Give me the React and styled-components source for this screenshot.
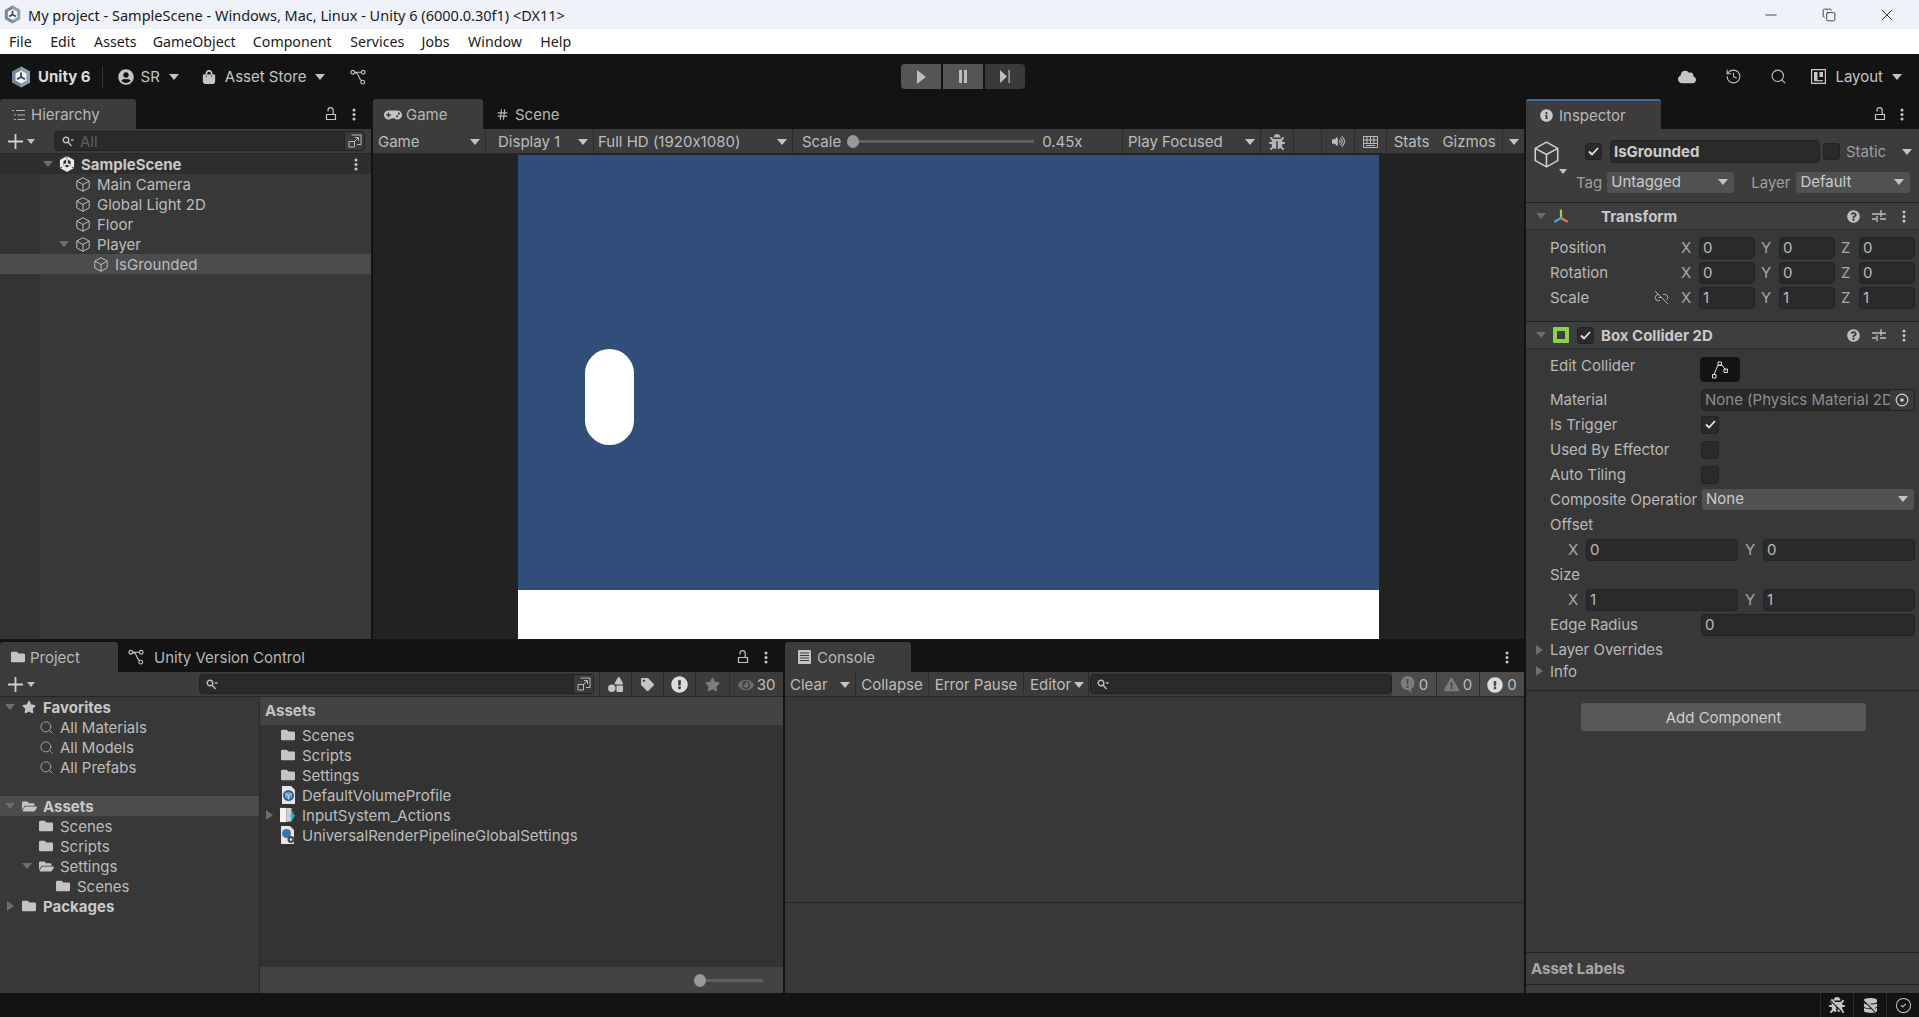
import React from 'react';
import styled, { createGlobalStyle } from 'styled-components';
import { FaBug, FaCloud, FaDatabase, FaExclamationCircle, FaExclamationTriangle, FaEye, FaFolder, FaFolderOpen, FaGamepad, FaInfoCircle, FaQuestionCircle, FaShoppingBag, FaStar, FaTag, FaUserCircle, FaVolumeUp, FaShapes } from 'react-icons/fa';
import { CircleCheck, Hash, History, Search, Link2Off, Minus, X, Copy } from 'lucide-react';

const Global = createGlobalStyle`
  html, body { margin: 0; padding: 0; background: #131313; }
  body { font-family: Inter, "Liberation Sans", sans-serif; font-size: 15px; color: #c2c2c2; overflow: hidden; font-feature-settings: "calt" 0; }
  * { box-sizing: border-box; }
`;

const Root = styled.div`display:flex;flex-direction:column;width:1919px;height:1017px;overflow:hidden;background:#131313;`;
const TitleBar = styled.div`height:29px;background:#eff3f9;display:flex;align-items:center;padding:0 3px 0 4px;color:#1a1a1a;font-family:"Noto Sans",sans-serif;font-size:14.5px;`;
const WinTitle = styled.span`margin-left:7px;flex:1;white-space:pre;`;
const WinBtn = styled.span`width:58px;height:29px;display:flex;align-items:center;justify-content:center;color:#111;`;
const MenuBar = styled.div`height:25px;background:#fff;display:flex;align-items:center;color:#1a1a1a;font-family:"Noto Sans",sans-serif;font-size:14.2px;padding-left:9px;`;
const MenuItem = styled.span`margin-right:${p => p.$mr ?? 18.5}px;`;

const MainBar = styled.div`height:45px;display:grid;grid-template-columns:901px auto 1fr;align-items:center;`;
const BarZone = styled.div`display:flex;align-items:center;height:45px;`;
const BarRight = styled(BarZone)`justify-content:flex-end;padding-right:17px;`;
const BarItem = styled.div`display:flex;align-items:center;margin-left:${p => p.$ml || 0}px;color:${p => p.$c || '#c4c4c4'};font-weight:${p => p.$bold ? 700 : 400};`;
const BarDivider = styled.span`width:1px;height:22px;background:#333;margin-left:${p => p.$ml}px;`;
const PlayGroup = styled.div`display:flex;gap:2px;`;
const PlayBtn = styled.div`width:40px;height:25px;border-radius:${p => p.$r};background:${p => p.$dim ? '#3a3a3a' : '#555'};display:flex;align-items:center;justify-content:center;color:#bdbdbd;`;

const Workspace = styled.div`flex:1;display:flex;gap:2px;min-height:0;`;
const LeftCol = styled.div`width:1524px;display:flex;flex-direction:column;gap:3px;`;
const TopRow = styled.div`height:540px;display:flex;gap:2px;`;
const BottomRow = styled.div`height:351px;display:flex;gap:2px;`;
const Panel = styled.div`width:${p => p.$w}px;display:flex;flex-direction:column;flex:none;min-height:0;`;
const TabStrip = styled.div`height:30px;display:flex;align-items:stretch;flex:none;`;
const Tab = styled.div`width:${p => p.$w}px;white-space:nowrap;display:flex;align-items:center;padding-left:${p => p.$pl}px;padding-top:${p => p.$pt || 0}px;gap:${p => p.$gap ?? 5}px;background:${p => p.$on ? '#3c3c3c' : 'transparent'};border-radius:3px 3px 0 0;color:#b8b8b8;${p => p.$blue ? 'border-top:2px solid #3c6a9c;' : ''}`;
const TabTools = styled.div`margin-left:auto;display:flex;align-items:center;gap:${p => p.$gap ?? 12}px;padding-right:${p => p.$pr}px;color:#bdbdbd;`;

const Bar = styled.div`height:25px;flex:none;background:#3c3c3c;border-bottom:1px solid #272727;display:flex;align-items:stretch;`;
const Cell = styled.div`width:${p => p.$w}px;flex:none;display:flex;align-items:center;justify-content:${p => p.$center ? 'center' : p.$start ? 'flex-start' : 'space-between'};padding:1px ${p => p.$pr ?? 5}px 0 ${p => p.$pl ?? 5}px;border-right:${p => p.$noline ? 'none' : '1px solid #2c2c2c'};color:#bcbcbc;background:${p => p.$bg || 'transparent'};gap:${p => p.$gap || 0}px;white-space:nowrap;`;
const SearchBox = styled.div`height:20px;align-self:center;width:${p => p.$w}px;margin-left:${p => p.$ml || 0}px;background:#2a2a2a;border:1px solid #212121;border-radius:4px;display:flex;align-items:center;padding-left:${p => p.$pl ?? 7}px;color:#5f5f5f;flex:none;gap:6px;`;
const SearchEnd = styled.span`margin-left:auto;width:20px;height:18px;border-left:1px solid #222;background:#3a3a3a;display:flex;align-items:center;justify-content:center;border-radius:0 3px 3px 0;`;
const PlusWrap = styled.div`display:flex;align-items:center;color:#c8c8c8;padding-left:8px;gap:4px;flex:none;width:${p => p.$w}px;`;
const SliderTrack = styled.span`height:3px;background:#5e5e5e;position:relative;display:block;flex:none;width:${p => p.$w}px;`;
const SliderThumb = styled.span`position:absolute;left:${p => p.$l}px;top:-5px;width:12px;height:13px;border-radius:50%;background:#999;`;
const ScaleLabel = styled.span`margin-right:6px;`;
const ScaleValue = styled.span`margin-left:8px;`;

const Caret = styled.span`display:inline-block;flex:none;width:0;height:0;margin-left:${p => p.$ml || 0}px;
  ${p => p.$right
    ? `border-top:5px solid transparent;border-bottom:5px solid transparent;border-left:7px solid ${p.$c || '#6e6e6e'};`
    : `border-left:${p.$s || 5}px solid transparent;border-right:${p.$s || 5}px solid transparent;border-top:${(p.$s || 5) + 1}px solid ${p.$c || '#c4c4c4'};`}`;

const Tree = styled.div`flex:1;background:${p => p.$gutter ? 'linear-gradient(to right,#333 40px,#383838 40px)' : '#383838'};min-height:0;display:flex;flex-direction:column;`;
const TreeRow = styled.div`height:20px;flex:none;display:flex;align-items:center;padding-left:${p => p.$in}px;background:${p => p.$sel ? '#4c4c4c' : p.$scene ? '#2e2e2e' : 'transparent'};color:${p => p.$bold ? '#c9c9c9' : '#bdbdbd'};font-weight:${p => p.$bold ? 700 : 400};white-space:nowrap;margin-top:${p => p.$mt || 0}px;`;
const CaretSlot = styled.span`width:16px;flex:none;display:flex;justify-content:center;align-items:center;`;
const IconSlot = styled.span`width:16px;height:16px;flex:none;margin:0 6px 0 3px;display:flex;align-items:center;justify-content:center;color:#c4c4c4;`;
const RowEnd = styled.span`margin-left:auto;padding-right:13px;display:flex;`;

const Viewport = styled.div`flex:1;background:#222;display:flex;justify-content:center;min-height:0;padding-top:1px;`;
const GameFrame = styled.div`width:861px;display:flex;flex-direction:column;`;
const Sky = styled.div`flex:1;background:#314d79;position:relative;`;
const Capsule = styled.div`position:absolute;left:67px;top:194px;width:49px;height:96px;background:#fff;border-radius:25px;`;
const Ground = styled.div`height:49px;background:#fff;flex:none;`;

const ProjectBody = styled.div`flex:1;display:flex;min-height:0;`;
const ProjectTree = styled.div`width:260px;flex:none;background:#383838;border-right:1px solid #2a2a2a;display:flex;flex-direction:column;`;
const ProjectFiles = styled.div`flex:1;display:flex;flex-direction:column;background:#333;`;
const PathHead = styled.div`height:28px;flex:none;background:#434343;display:flex;align-items:center;padding:0 0 2px 5px;font-weight:700;color:#c2c2c2;`;
const FileList = styled.div`flex:1;`;
const FileFooter = styled.div`height:26px;flex:none;background:#434343;display:flex;align-items:center;justify-content:flex-end;padding-right:20px;`;

const ConsoleBody = styled.div`flex:1;display:flex;flex-direction:column;background:#383838;`;
const ConsoleTop = styled.div`height:206px;flex:none;border-bottom:1px solid #262626;`;

const Inspector = styled.div`flex:1;display:flex;flex-direction:column;min-width:0;`;
const InspBody = styled.div`flex:1;background:#3c3c3c;display:flex;flex-direction:column;min-height:0;`;
const ObjHeader = styled.div`height:74px;flex:none;border-bottom:1px solid #222;display:grid;grid-template-columns:50px 1fr;padding:11px 6px 0 9px;background:#3c3c3c;`;
const ObjIcon = styled.div`display:flex;flex-direction:column;align-items:flex-start;color:#d0d0d0;`;
const CubeHolder = styled.span`display:flex;margin-left:-3px;`;
const ObjLines = styled.div`display:flex;flex-direction:column;gap:8px;`;
const ObjLine = styled.div`display:flex;align-items:center;height:23px;`;
const Check = styled.span`width:${p => p.$s || 17}px;height:${p => p.$s || 17}px;background:#2a2a2a;border:1px solid #232323;border-radius:3px;flex:none;display:flex;align-items:center;justify-content:center;margin-left:${p => p.$ml || 0}px;margin-right:${p => p.$mr || 0}px;`;
const NameField = styled.div`width:210px;height:23px;flex:none;background:#2a2a2a;border:1px solid #232323;border-radius:4px;display:flex;align-items:center;padding-left:3px;font-weight:700;color:#cdcdcd;margin-left:8px;`;
const Select = styled.div`width:${p => p.$w}px;height:${p => p.$h || 21}px;flex:none;background:#515151;border-radius:3px;display:flex;align-items:center;justify-content:space-between;padding:0 6px 2px 4px;color:#cbcbcc;margin-left:${p => p.$ml || 0}px;`;
const SoftLabel = styled.span`color:#9f9f9f;margin-left:${p => p.$ml || 0}px;`;
const StaticCaret = styled.span`margin-left:auto;margin-right:1px;display:flex;`;

const CompHead = styled.div`height:${p => p.$h || 27}px;flex:none;display:flex;align-items:center;padding:0 13px 0 10px;border-bottom:1px solid #2e2e2e;background:#3e3e3e;font-weight:700;color:#c8c8c8;`;
const CompIcon = styled.span`width:16px;margin-left:${p => p.$ml}px;display:flex;flex:none;`;
const CompName = styled.span`margin-left:${p => p.$ml || 0}px;`;
const CompTools = styled.span`margin-left:auto;display:flex;align-items:center;gap:12px;color:#bdbdbd;`;
const SliderSlot = styled.span`display:flex;margin-right:4px;`;
const CompBody = styled.div`flex:none;padding:${p => p.$pad};border-bottom:${p => p.$line ? '1px solid #222' : 'none'};background:#383838;`;
const PropRow = styled.div`height:${p => p.$h || 25}px;display:flex;align-items:center;padding-left:${p => p.$pl ?? 24}px;padding-right:4px;color:#b9b9b9;`;
const PropLabel = styled.span`width:${p => p.$w || 151}px;flex:none;white-space:nowrap;overflow:hidden;display:flex;align-items:center;justify-content:space-between;padding-right:${p => p.$pr || 0}px;margin-top:${p => p.$mt || 0}px;align-self:${p => p.$top ? 'flex-start' : 'auto'};`;
const AxisName = styled.span`width:${p => p.$w || 18}px;flex:none;color:#a8a8a8;`;
const Num = styled.div`height:22px;width:${p => p.$w ? `${p.$w}px` : 'auto'};flex:${p => p.$w ? 'none' : 1};background:#2a2a2a;border:1px solid #232323;border-radius:4px;display:flex;align-items:center;padding-left:3px;margin-right:${p => p.$mr || 0}px;color:#bbb;white-space:nowrap;overflow:hidden;`;
const ObjField = styled(Num)`color:#8e8e8e;padding-right:0;`;
const ObjText = styled.span`flex:1;overflow:hidden;white-space:nowrap;`;
const ObjPick = styled.span`width:24px;height:20px;background:#3a3a3a;flex:none;display:flex;align-items:center;justify-content:center;`;
const EditBtn = styled.div`width:40px;height:25px;background:#141414;border-radius:4px;display:flex;align-items:center;justify-content:center;margin-left:-1px;align-self:flex-start;`;
const FoldRow = styled.div`height:${p => p.$h}px;display:flex;align-items:center;padding-left:10px;gap:7px;color:#b9b9b9;`;
const AddWrap = styled.div`flex:none;padding:12px 0 0 55px;border-top:1px solid #232323;background:#383838;`;
const AddBtn = styled.div`width:285px;height:28px;background:#585858;border-radius:3px;display:flex;align-items:center;justify-content:center;color:#cfcfcf;`;
const Filler = styled.div`flex:1;background:#383838;`;
const LabelsHead = styled.div`height:33px;flex:none;border-top:1px solid #222;border-bottom:1px solid #222;display:flex;align-items:center;padding-left:5px;background:#3c3c3c;font-weight:700;color:#a8a8a8;`;
const LabelsTail = styled.div`height:8px;flex:none;background:#3c3c3c;`;

const StatusBar = styled.div`height:24px;flex:none;display:flex;justify-content:flex-end;align-items:center;`;
const StatusCell = styled.span`width:33px;height:24px;border-left:1px solid #2d2d2d;display:flex;align-items:center;justify-content:center;color:#c4c4c4;position:relative;
  ${p => p.$slash ? `&::after{content:"";position:absolute;left:8px;right:8px;top:11px;height:2px;background:#c4c4c4;box-shadow:0 1px 0 #131313;transform:rotate(45deg);}` : ''}`;

/* drawn icons */
const UnityLogo = ({ s = 20 }) => (
  <svg width={s} height={s + 2} viewBox="0 0 20 22">
    <path d="M10 .5l9 5.100v10.800L10 21.500 1 16.400V5.600z" fill="#75869a" />
    <path d="M10 .5l9 5.100v10.800L10 21.500z" fill="#8e9fb0" />
    <path d="M10 4.500l5.500 3.100v6.800L10 17.500l-5.500-3.100V7.600z" fill="#f1f3f5" />
    <path d="M10 11V6.500M10 11l-4 2.300M10 11l4 2.300" stroke="#39485a" strokeWidth="1.900" />
  </svg>
);
const SceneIcon = () => (
  <svg width="17" height="18" viewBox="0 0 17 18">
    <path d="M8.500.5l7.500 4.200v8.600l-7.500 4.200L1 13.300V4.700z" fill="#ececec" />
    <path d="M8.500 3.800l3.800 2.200v4.400l-3.800 2.200-3.800-2.200V6z" fill="#2e2e2e" />
    <path d="M8.500 4v4.500M8.500 8.500L5 10.500M8.500 8.500l3.500 2" stroke="#ececec" strokeWidth="1.800" />
    <path d="M8.500 0v3M1 13.500l2.600-1.500M16 13.500L13.400 12" stroke="#2e2e2e" strokeWidth="1" />
  </svg>
);
const Cube = ({ s = 17, c = '#bcbcbc', w = 1 }) => (
  <svg width={s} height={s} viewBox="0 0 16 16" fill="none" stroke={c} strokeWidth={w}>
    <path d="M8 1.200l6.200 3.400v6.800L8 14.800l-6.200-3.400V4.600zM1.800 4.600L8 8l6.200-3.400M8 8v6.800" strokeLinejoin="round" />
  </svg>
);
const Lock = () => (
  <svg width="12" height="14" viewBox="0 0 12 14" fill="none" stroke="#c4c4c4" strokeWidth="1.200">
    <path d="M1.500 7.500h9v5h-9zM3 4.500V3.200a2.600 2.600 0 0 1 5.200 0v4.300" />
  </svg>
);
const Dots = ({ c = '#c8c8c8' }) => (
  <svg width="4" height="13" viewBox="0 0 4 13" fill={c}>
    <circle cx="2" cy="2" r="1.500" /><circle cx="2" cy="6.500" r="1.500" /><circle cx="2" cy="11" r="1.500" />
  </svg>
);
const ListIcon = () => (
  <svg width="13" height="12" viewBox="0 0 13 12" stroke="#b0b0b0" fill="none">
    <path d="M0 1.500h2M4 1.500h9M2 6h2M5.500 6H13M2 10.500h2M5.500 10.500H13" />
  </svg>
);
const Branch = ({ c = '#c4c4c4' }) => (
  <svg width="16" height="16" viewBox="0 0 17 17" fill="none" stroke={c} strokeWidth="1.200">
    <circle cx="3" cy="3.500" r="2" /><circle cx="14" cy="3.500" r="2" /><circle cx="13.500" cy="14" r="2" />
    <path d="M5 3.500h7M5 4c3 0 3 1 4.500 4.500 1 2.500 2 3.500 3 4" />
  </svg>
);
const Plus = () => (
  <svg width="15" height="15" viewBox="0 0 15 15" stroke="#d0d0d0" strokeWidth="1.800"><path d="M7.500 0v15M0 7.500h15" /></svg>
);
const MiniSearch = () => (
  <svg width="12" height="11" viewBox="0 0 12 11" fill="none" stroke="#bdbdbd" strokeWidth="1.400">
    <circle cx="4" cy="4" r="2.800" /><path d="M6 6l3.500 4M9 4h2.500" />
  </svg>
);
const SearchExpand = () => (
  <svg width="14" height="14" viewBox="0 0 14 14" fill="none" stroke="#b8b8b8">
    <path d="M3.500 1h9.500v9.500H9M1 7.500h5.500V13H1zM6 8l4.500-4.500M7 3.500h3.500V7" />
  </svg>
);
const LayoutGlyph = () => (
  <svg width="15" height="15" viewBox="0 0 15 15" fill="none" stroke="#c8c8c8" strokeWidth="1.200">
    <path d="M.6.600h13.800v13.800H.600z" /><path d="M3 3h3.500v8H3zM8.500 3H12v5H8.500z" fill="#c8c8c8" stroke="none" /><path d="M3 11.700h9" />
  </svg>
);
const KeyGrid = () => (
  <svg width="15" height="14" viewBox="0 0 15 14" fill="none" stroke="#bdbdbd">
    <path d="M.5 1.500h14v11H.5zM.5 5h14M.5 8.500h14M4 1.500v7M7.500 1.500v7M11 1.500v7M3 10.500h9" />
  </svg>
);
const PlayGlyph = () => <svg width="10" height="14" viewBox="0 0 10 14" fill="#bdbdbd"><path d="M1 0l9 7-9 7z" /></svg>;
const PauseGlyph = () => <svg width="10" height="13" viewBox="0 0 10 13" fill="#bdbdbd"><path d="M1 0h3v13H1zM6 0h3v13H6z" /></svg>;
const StepGlyph = () => <svg width="12" height="13" viewBox="0 0 12 13" fill="#bdbdbd"><path d="M1 0l7 6.500-7 6.500zM9.500 0h1.200v13H9.500z" /></svg>;
const AxisGlyph = () => (
  <svg width="16" height="15" viewBox="0 0 16 15" fill="none" strokeWidth="2.200" strokeLinecap="round">
    <path d="M8 8V1.500" stroke="#9fd34e" /><path d="M8 9l6 3.500" stroke="#e9764f" /><path d="M8 9l-6 3.500" stroke="#47a8dc" />
  </svg>
);
const ColliderGlyph = () => (
  <svg width="16" height="16" viewBox="0 0 16 16"><rect width="16" height="16" rx="1" fill="#8fd14f" /><rect x="4" y="4" width="8" height="8" fill="#3e3e3e" /></svg>
);
const Tick = () => (
  <svg width="11" height="9" viewBox="0 0 11 9" fill="none" stroke="#e6e6e6" strokeWidth="1.800"><path d="M1 4.500l3 3 6-6.500" /></svg>
);
const Sliders = () => (
  <svg width="14" height="12" viewBox="0 0 14 12" stroke="#c0c0c0" strokeWidth="1.300"><path d="M0 4h14M0 9h4M8 9h6M9 0v7M5 6v6" /></svg>
);
const Polyline = () => (
  <svg width="18" height="18" viewBox="0 0 18 18" fill="none" stroke="#dcdcdc"><path d="M3 13.500L7 4h4l4 5.500" /><path d="M1.500 13.500h3.500V17H1.500zM7 1h3.500v3.500H7zM13 8h3.500v3.500H13z" /></svg>
);
const PickGlyph = () => (
  <svg width="14" height="14" viewBox="0 0 14 14" fill="none" stroke="#d0d0d0" strokeWidth="1.200"><circle cx="7" cy="7" r="5.800" /><circle cx="7" cy="7" r="1.800" fill="#d0d0d0" stroke="none" /></svg>
);
const ConsoleGlyph = () => (
  <svg width="13" height="14" viewBox="0 0 13 14"><rect width="13" height="14" rx="1" fill="#c4c4c4" /><path d="M2 3h9M2 5.500h9M2 8h9M2 10.500h9" stroke="#3c3c3c" /></svg>
);
const InfoBubble = () => (
  <svg width="15" height="17" viewBox="0 0 15 17"><path d="M7.500 0a7 7 0 0 1 7 7c0 3-1.500 5-3.500 6l1 4-4-3a7 7 0 0 1-.500-14z" fill="#7c7c7c" /><path d="M6.500 3h2l-.3 5.500h-1.400zM6.500 10h2v2h-2z" fill="#4b4b4b" /></svg>
);
const DocVolume = () => (
  <svg width="15" height="18" viewBox="0 0 15 18"><path d="M1 0h9l4 4v14H1z" fill="#e6e6e6" /><circle cx="7.500" cy="9.500" r="5.500" fill="#2f5f8f" /><path d="M7.500 5.500l3.500 2v4l-3.500 2-3.500-2v-4z" fill="#6aa0cf" /><path d="M7.500 9.500v4M4 7.500l3.500 2 3.500-2" stroke="#c9dcef" strokeWidth=".8" fill="none" /></svg>
);
const BookGlyph = () => (
  <svg width="18" height="18" viewBox="0 0 18 18"><path d="M0 1h7v16H0z" fill="#f2f2f2" /><path d="M7 1h6v15l-6 1z" fill="#cfcfcf" /><path d="M15 4l-4 7h2l-1 7 5-9h-2z" fill="#29b6e8" /></svg>
);
const DocGear = () => (
  <svg width="16" height="18" viewBox="0 0 16 18"><path d="M1 0h9l4 4v14H1z" fill="#e6e6e6" /><circle cx="6.500" cy="7.500" r="4.500" fill="#3f74a8" /><circle cx="11" cy="13.500" r="3.500" fill="#4a4a4a" /><circle cx="11" cy="13.500" r="1.200" fill="#e6e6e6" /></svg>
);

const Row = ({ in: indent, caret, right, icon, children, end, ...rest }) => (
  <TreeRow $in={indent} {...rest}>
    <CaretSlot>{caret ? <Caret $c="#6e6e6e" $s={5} /> : right ? <Caret $right /> : null}</CaretSlot>
    <IconSlot>{icon}</IconSlot>
    {children}
    {end}
  </TreeRow>
);

const Folder = <FaFolder size={14} color="#c4c4c4" />;
const FolderOpen = <FaFolderOpen size={15} color="#c4c4c4" />;
const Lens = <Search size={15} color="#a8a8a8" strokeWidth={1.500} />;

const VecRow = ({ label, v, extra }) => (
  <PropRow>
    <PropLabel $w={131} $pr={12}>{label}{extra}</PropLabel>
    <AxisName>X</AxisName><Num $w={56} $mr={6}>{v}</Num>
    <AxisName>Y</AxisName><Num $w={56} $mr={6}>{v}</Num>
    <AxisName>Z</AxisName><Num $w={56}>{v}</Num>
  </PropRow>
);
const PairRow = ({ v }) => (
  <PropRow $pl={42}>
    <AxisName>X</AxisName><Num $w={152} $mr={7}>{v}</Num>
    <AxisName>Y</AxisName><Num>{v}</Num>
  </PropRow>
);

export default function App() {
  return (
    <Root>
      <Global />
      <TitleBar>
        <UnityLogo s={17} />
        <WinTitle>{'My project - SampleScene - Windows, Mac, Linux - Unity 6 (6000.0.30f1) <DX11>'}</WinTitle>
        <WinBtn><Minus size={18} strokeWidth={1} /></WinBtn>
        <WinBtn><Copy size={14} strokeWidth={1.300} /></WinBtn>
        <WinBtn><X size={20} strokeWidth={1} /></WinBtn>
      </TitleBar>
      <MenuBar>
        <MenuItem>File</MenuItem><MenuItem>Edit</MenuItem><MenuItem $mr={16}>Assets</MenuItem>
        <MenuItem $mr={17.200}>GameObject</MenuItem><MenuItem>Component</MenuItem><MenuItem $mr={17.300}>Services</MenuItem>
        <MenuItem>Jobs</MenuItem><MenuItem>Window</MenuItem><MenuItem $mr={0}>Help</MenuItem>
      </MenuBar>
      <MainBar>
        <BarZone>
          <BarItem $ml={11}><UnityLogo /></BarItem>
          <BarItem $ml={7} $bold $c="#dcdcdc">Unity 6</BarItem>
          <BarDivider $ml={11} />
          <BarItem $ml={15}><FaUserCircle size={16} /></BarItem>
          <BarItem $ml={7}>SR</BarItem>
          <BarItem $ml={9}><Caret /></BarItem>
          <BarItem $ml={23}><FaShoppingBag size={14} /></BarItem>
          <BarItem $ml={9}>Asset Store</BarItem>
          <BarItem $ml={9}><Caret /></BarItem>
          <BarItem $ml={25}><Branch /></BarItem>
        </BarZone>
        <PlayGroup>
          <PlayBtn $r="4px 0 0 4px"><PlayGlyph /></PlayBtn>
          <PlayBtn $r="0"><PauseGlyph /></PlayBtn>
          <PlayBtn $r="0 4px 4px 0" $dim><StepGlyph /></PlayBtn>
        </PlayGroup>
        <BarRight>
          <BarItem><FaCloud size={18} /></BarItem>
          <BarItem $ml={29}><History size={17} strokeWidth={1.500} /></BarItem>
          <BarItem $ml={28}><Search size={17} strokeWidth={1.500} /></BarItem>
          <BarItem $ml={24}><LayoutGlyph /></BarItem>
          <BarItem $ml={9}>Layout</BarItem>
          <BarItem $ml={9}><Caret /></BarItem>
        </BarRight>
      </MainBar>
      <Workspace>
        <LeftCol>
          <TopRow>
            <Panel $w={371}>
              <TabStrip>
                <Tab $on $w={136} $pl={12} $pt={1} $gap={6}><ListIcon />Hierarchy</Tab>
                <TabTools $pr={15} $gap={15}><Lock /><Dots /></TabTools>
              </TabStrip>
              <Bar>
                <PlusWrap $w={54}><Plus /><Caret $s={4.500} /></PlusWrap>
                <SearchBox $w={311}>
                  <MiniSearch />All
                  <SearchEnd><SearchExpand /></SearchEnd>
                </SearchBox>
              </Bar>
              <Tree $gutter>
                <Row in={40} caret icon={<SceneIcon />} $scene $bold end={<RowEnd><Dots /></RowEnd>}>SampleScene</Row>
                <Row in={56} icon={<Cube />}>Main Camera</Row>
                <Row in={56} icon={<Cube />}>Global Light 2D</Row>
                <Row in={56} icon={<Cube />}>Floor</Row>
                <Row in={56} caret icon={<Cube />}>Player</Row>
                <Row in={74} icon={<Cube />} $sel>IsGrounded</Row>
              </Tree>
            </Panel>
            <Panel $w={1151}>
              <TabStrip>
                <Tab $on $w={110} $pl={11} $pt={1} $gap={4}><FaGamepad size={18} color="#c4c4c4" />Game</Tab>
                <Tab $w={100} $pl={13} $pt={1} $gap={6}><Hash size={13} />Scene</Tab>
              </TabStrip>
              <Bar>
                <Cell $w={113}>Game<Caret $s={5} /></Cell>
                <Cell $w={108} $pl={12}>Display 1<Caret /></Cell>
                <Cell $w={199} $pl={4}>Full HD (1920x1080)<Caret /></Cell>
                <Cell $w={330} $start $pl={9}>
                  <ScaleLabel>Scale</ScaleLabel>
                  <SliderTrack $w={187}><SliderThumb $l={0} /></SliderTrack>
                  <ScaleValue>0.45x</ScaleValue>
                </Cell>
                <Cell $w={138}>Play Focused<Caret /></Cell>
                <Cell $w={33} $center><FaBug size={16} color="#b5b5b5" /></Cell>
                <Cell $w={28} />
                <Cell $w={33} $center><FaVolumeUp size={13} /></Cell>
                <Cell $w={32} $center><KeyGrid /></Cell>
                <Cell $w={49} $center $noline $pl={0} $pr={0}>Stats</Cell>
                <Cell $w={67} $center $pl={0} $pr={0}>Gizmos</Cell>
                <Cell $w={21} $center $noline><Caret /></Cell>
              </Bar>
              <Viewport>
                <GameFrame>
                  <Sky><Capsule /></Sky>
                  <Ground />
                </GameFrame>
              </Viewport>
            </Panel>
          </TopRow>
          <BottomRow>
            <Panel $w={783}>
              <TabStrip>
                <Tab $on $w={118} $pl={11} $gap={5}><FaFolder size={14} color="#c4c4c4" />Project</Tab>
                <Tab $w={200} $pl={10} $gap={10}><Branch c="#c8c8c8" />Unity Version Control</Tab>
                <TabTools $pr={15} $gap={15}><Lock /><Dots /></TabTools>
              </TabStrip>
              <Bar>
                <PlusWrap $w={199}><Plus /><Caret $s={4.500} /></PlusWrap>
                <SearchBox $w={395} $pl={6}>
                  <MiniSearch />
                  <SearchEnd><SearchExpand /></SearchEnd>
                </SearchBox>
                <Cell $w={6} $pl={0} $pr={0} />
                <Cell $w={32} $center $pl={0} $pr={0}><FaShapes size={15} color="#c4c4c4" /></Cell>
                <Cell $w={32} $center $pl={0} $pr={0}><FaTag size={13} color="#c4c4c4" /></Cell>
                <Cell $w={32} $center $pl={0} $pr={0}><FaExclamationCircle size={17} color="#dcdcdc" /></Cell>
                <Cell $w={34} $center $pl={0} $pr={0}><FaStar size={15} color="#7e7e7e" /></Cell>
                <Cell $w={53} $center $noline $gap={3} $pl={0} $pr={0}><FaEye size={16} color="#6d6d6d" />30</Cell>
              </Bar>
              <ProjectBody>
                <ProjectTree>
                  <Row in={2} caret icon={<FaStar size={14} color="#c4c4c4" />} $bold>Favorites</Row>
                  <Row in={19} icon={Lens}>All Materials</Row>
                  <Row in={19} icon={Lens}>All Models</Row>
                  <Row in={19} icon={Lens}>All Prefabs</Row>
                  <Row in={2} caret icon={FolderOpen} $bold $sel $mt={19}>Assets</Row>
                  <Row in={19} icon={Folder}>Scenes</Row>
                  <Row in={19} icon={Folder}>Scripts</Row>
                  <Row in={19} caret icon={FolderOpen}>Settings</Row>
                  <Row in={36} icon={Folder}>Scenes</Row>
                  <Row in={2} right icon={Folder} $bold>Packages</Row>
                </ProjectTree>
                <ProjectFiles>
                  <PathHead>Assets</PathHead>
                  <FileList>
                    <Row in={1} icon={Folder}>Scenes</Row>
                    <Row in={1} icon={Folder}>Scripts</Row>
                    <Row in={1} icon={Folder}>Settings</Row>
                    <Row in={1} icon={<DocVolume />}>DefaultVolumeProfile</Row>
                    <Row in={1} right icon={<BookGlyph />}>InputSystem_Actions</Row>
                    <Row in={1} icon={<DocGear />}>UniversalRenderPipelineGlobalSettings</Row>
                  </FileList>
                  <FileFooter>
                    <SliderTrack $w={63}><SliderThumb $l={-6} /></SliderTrack>
                  </FileFooter>
                </ProjectFiles>
              </ProjectBody>
            </Panel>
            <Panel $w={739}>
              <TabStrip>
                <Tab $on $w={126} $pl={13} $gap={6}><ConsoleGlyph />Console</Tab>
                <TabTools $pr={15}><Dots /></TabTools>
              </TabStrip>
              <Bar>
                <Cell $w={50} $noline $pr={0}>Clear</Cell>
                <Cell $w={21} $center><Caret /></Cell>
                <Cell $w={73} $center $pl={0} $pr={0}>Collapse</Cell>
                <Cell $w={95} $center $pl={0} $pr={0}>Error Pause</Cell>
                <Cell $w={65} $pl={6} $pr={4}>Editor<Caret /></Cell>
                <SearchBox $w={302} $ml={1} $pl={6}><MiniSearch /></SearchBox>
                <Cell $w={45} $center $pl={0} $pr={0} $gap={4} $bg="#4b4b4b"><InfoBubble />0</Cell>
                <Cell $w={43} $center $pl={0} $pr={0} $gap={4} $bg="#4b4b4b"><FaExclamationTriangle size={15} color="#7c7c7c" />0</Cell>
                <Cell $w={44} $center $pl={0} $pr={0} $gap={4} $noline $bg="#4b4b4b"><FaExclamationCircle size={16} color="#dcdcdc" />0</Cell>
              </Bar>
              <ConsoleBody>
                <ConsoleTop />
              </ConsoleBody>
            </Panel>
          </BottomRow>
        </LeftCol>
        <Inspector>
          <TabStrip>
            <Tab $on $blue $w={135} $pl={14} $gap={6}><FaInfoCircle size={13} color="#c8c8c8" />Inspector</Tab>
            <TabTools $pr={15} $gap={14}><Lock /><Dots /></TabTools>
          </TabStrip>
          <InspBody>
            <ObjHeader>
              <ObjIcon>
                <CubeHolder><Cube s={29} c="#d0d0d0" w={0.85} /></CubeHolder>
                <Caret $s={4} $ml={24} />
              </ObjIcon>
              <ObjLines>
                <ObjLine>
                  <Check><Tick /></Check>
                  <NameField>IsGrounded</NameField>
                  <Check $ml={3} />
                  <SoftLabel $ml={6}>Static</SoftLabel>
                  <StaticCaret><Caret $s={5} /></StaticCaret>
                </ObjLine>
                <ObjLine>
                  <SoftLabel $ml={-9}>Tag</SoftLabel>
                  <Select $w={127} $ml={5}>Untagged<Caret /></Select>
                  <SoftLabel $ml={17}>Layer</SoftLabel>
                  <Select $w={114} $ml={6}>Default<Caret /></Select>
                </ObjLine>
              </ObjLines>
            </ObjHeader>
            <CompHead>
              <Caret $c="#6e6e6e" />
              <CompIcon $ml={7}><AxisGlyph /></CompIcon>
              <CompName $ml={32}>Transform</CompName>
              <CompTools><FaQuestionCircle size={13} /><SliderSlot><Sliders /></SliderSlot><Dots /></CompTools>
            </CompHead>
            <CompBody $pad="5px 0 11px" $line>
              <VecRow label="Position" v="0" />
              <VecRow label="Rotation" v="0" />
              <VecRow label="Scale" v="1" extra={<Link2Off size={15} strokeWidth={1.500} color="#b9b9b9" />} />
            </CompBody>
            <CompHead>
              <Caret $c="#6e6e6e" />
              <CompIcon $ml={7}><ColliderGlyph /></CompIcon>
              <Check $ml={8} $mr={7}><Tick /></Check>
              Box Collider 2D
              <CompTools><FaQuestionCircle size={13} /><SliderSlot><Sliders /></SliderSlot><Dots /></CompTools>
            </CompHead>
            <CompBody $pad="8px 0 10px">
              <PropRow $h={30}>
                <PropLabel $top $mt={-1}>Edit Collider</PropLabel>
                <EditBtn><Polyline /></EditBtn>
              </PropRow>
              <PropRow>
                <PropLabel>Material</PropLabel>
                <ObjField><ObjText>None (Physics Material 2D)</ObjText><ObjPick><PickGlyph /></ObjPick></ObjField>
              </PropRow>
              <PropRow><PropLabel>Is Trigger</PropLabel><Check $s={18}><Tick /></Check></PropRow>
              <PropRow><PropLabel>Used By Effector</PropLabel><Check $s={18} /></PropRow>
              <PropRow><PropLabel>Auto Tiling</PropLabel><Check $s={18} /></PropRow>
              <PropRow>
                <PropLabel $w={147}>Composite Operation</PropLabel>
                <Select $w={212} $ml={5}>None<Caret /></Select>
              </PropRow>
              <PropRow><PropLabel>Offset</PropLabel></PropRow>
              <PairRow v="0" />
              <PropRow><PropLabel>Size</PropLabel></PropRow>
              <PairRow v="1" />
              <PropRow><PropLabel>Edge Radius</PropLabel><Num>0</Num></PropRow>
              <FoldRow $h={25}><Caret $right />Layer Overrides</FoldRow>
              <FoldRow $h={18}><Caret $right />Info</FoldRow>
            </CompBody>
            <AddWrap><AddBtn>Add Component</AddBtn></AddWrap>
            <Filler />
            <LabelsHead>Asset Labels</LabelsHead>
            <LabelsTail />
          </InspBody>
        </Inspector>
      </Workspace>
      <StatusBar>
        <StatusCell $slash><FaBug size={16} /></StatusCell>
        <StatusCell $slash><FaDatabase size={15} /></StatusCell>
        <StatusCell><CircleCheck size={17} strokeWidth={1.500} /></StatusCell>
      </StatusBar>
    </Root>
  );
}
